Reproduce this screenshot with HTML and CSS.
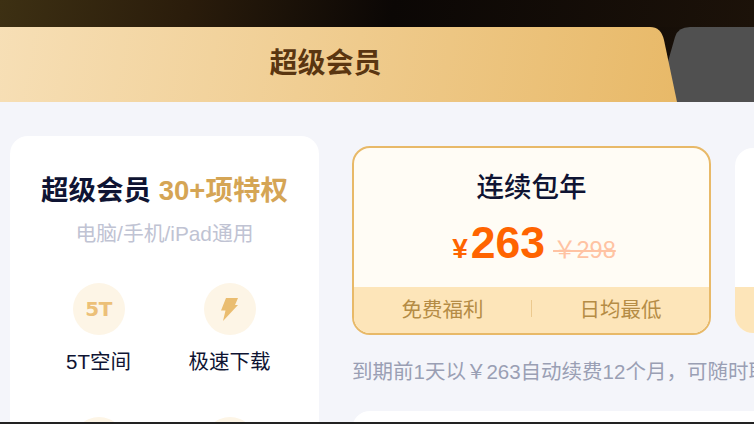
FILE: index.html
```html
<!DOCTYPE html>
<html lang="zh-CN">
<head>
<meta charset="utf-8">
<title>超级会员</title>
<link rel="stylesheet" href="styles.css">
</head>
<body>
<div class="page">
  <div class="topband"></div>
  <div class="tabs">
    <div class="tab tab-active">超级会员</div>
    <div class="tab tab-other"></div>
  </div>
  <main class="main">
    <aside class="perks">
      <h2 class="perks-title">超级会员 <span class="gold">30+项特权</span></h2>
      <p class="perks-sub">电脑/手机/iPad通用</p>
      <div class="perk-grid">
        <div class="perk"><div class="perk-icon"><span class="five-t">5T</span></div><div class="perk-label">5T空间</div></div>
        <div class="perk"><div class="perk-icon">
          <svg width="17" height="23" viewBox="0 0 17 23"><path d="M5 0H17L14 7H17L2 23L4.500 12.500H0z" fill="#eabd70"/></svg>
        </div><div class="perk-label">极速下载</div></div>
        <div class="perk"><div class="perk-icon"></div></div>
        <div class="perk"><div class="perk-icon"></div></div>
      </div>
    </aside>
    <section class="plans">
      <div class="plan-row">
        <div class="plan plan-selected">
          <div class="plan-body">
            <div class="plan-name">连续包年</div>
            <div class="plan-price"><span class="yen">¥</span><span class="amount">263</span><span class="old">￥298</span></div>
          </div>
          <div class="plan-foot"><span class="foot-cell">免费福利</span><span class="foot-sep"></span><span class="foot-cell">日均最低</span></div>
        </div>
        <div class="plan plan-next">
          <div class="plan-body"></div>
          <div class="plan-foot plan-foot-next"></div>
        </div>
      </div>
      <p class="note">到期前1天以￥263自动续费12个月，可随时取消</p>
      <div class="lower-card"></div>
    </section>
  </main>
</div>
</body>
</html>
```
FILE: styles.css
```css
* { box-sizing: border-box; }
html, body { margin: 0; padding: 0; }
body {
  width: 754px;
  height: 424px;
  overflow: hidden;
  font-family: "Liberation Sans", "Noto Sans CJK SC", sans-serif;
  background: #f4f5fa;
}
.page { width: 754px; height: 424px; overflow: hidden; display: flex; flex-direction: column; border-bottom: 2px solid #222; }
.topband { height: 27px; flex: none; background: linear-gradient(100deg, #3d3013 0%, #2a1c0b 25%, #0b0705 52%, #1c1209 100%); }
.tabs { height: 75px; flex: none; display: flex; background: linear-gradient(100deg, #0b0705 60%, #1c1209 100%); }
.tab { height: 75px; }
.tab-active {
  width: 697px;
  margin-left: -20px;
  position: relative;
  z-index: 1;
  display: flex;
  align-items: center;
  justify-content: center;
  padding: 0 6px 7px 0;
  font-size: 28px;
  font-weight: 700;
  color: #5a3611;
  background: linear-gradient(100deg, #f7e0b8 0%, #e8b968 100%);
  clip-path: path("M18 0H670Q681 0 684 13L697 75H0V18Q0 0 18 0Z");
}
.tab-other {
  flex: 1;
  margin-left: -27px;
  background: #505050;
  clip-path: path("M40 0H104V75H8L19 31L25 10Q28 0 40 0Z");
}
.main { flex: 1; display: flex; gap: 33px; padding: 34px 0 0 10px; min-height: 0; }
.perks { width: 309px; flex: none; height: 400px; background: #fff; border-radius: 18px; padding-top: 37px; }
.perks-title { margin: 0; text-align: center; font-size: 27.500px; line-height: 36px; font-weight: 700; color: #0f1433; white-space: nowrap; }
.gold { color: #d5a555; }
.perks-sub { margin: 11px 0 0; text-align: center; font-size: 20.800px; line-height: 28px; color: #c0c3d3; white-space: nowrap; }
.perk-grid { display: grid; grid-template-columns: 131px 131px; margin: 35px 0 0 23px; row-gap: 41px; }
.perk { display: flex; flex-direction: column; align-items: center; gap: 13px; }
.perk-icon { width: 52px; height: 52px; border-radius: 50%; background: #fdf5e6; display: flex; align-items: center; justify-content: center; }
.five-t { font-family: "DejaVu Sans", sans-serif; font-size: 20px; font-weight: 700; color: #ecc078; letter-spacing: -0.500px; }
.perk-label { font-size: 20.500px; line-height: 28px; color: #0f1433; white-space: nowrap; }
.plans { flex: none; width: 402px; padding-top: 10px; }
.plan-row { display: flex; gap: 24px; align-items: center; width: 420px; }
.plan { flex: none; display: flex; flex-direction: column; overflow: hidden; border-radius: 18px; }
.plan-selected { width: 359px; height: 189px; border: 2.500px solid #e8b968; background: #fffcf5; }
.plan-next { width: 60px; height: 185px; background: #fff; }
.plan-body { flex: 1; display: flex; flex-direction: column; align-items: center; }
.plan-name { margin-top: 20px; font-size: 27.500px; line-height: 40px; font-weight: 500; color: #0f1433; }
.plan-price { margin-top: 9px; padding-left: 5px; display: flex; align-items: baseline; color: #ff6400; height: 52px; }
.yen { font-size: 28px; font-weight: 700; margin-right: 3px; }
.amount { font-size: 44.500px; line-height: 52px; font-weight: 700; }
.old { margin-left: 8px; font-size: 23.500px; color: #ffc3a3; text-decoration: line-through; }
.plan-foot { height: 46px; flex: none; background: #fde5b9; display: flex; align-items: center; padding-bottom: 4px; }
.foot-cell { flex: 1; text-align: center; font-size: 20.500px; color: #b58c45; }
.foot-sep { width: 1px; height: 17px; background: #ecc98e; }
.note { margin: 23px 0 0; font-size: 20.500px; line-height: 28px; color: #9a9fb4; white-space: nowrap; }
.lower-card { margin-top: 25px; width: 420px; height: 80px; background: #fff; border-radius: 18px; }
```
